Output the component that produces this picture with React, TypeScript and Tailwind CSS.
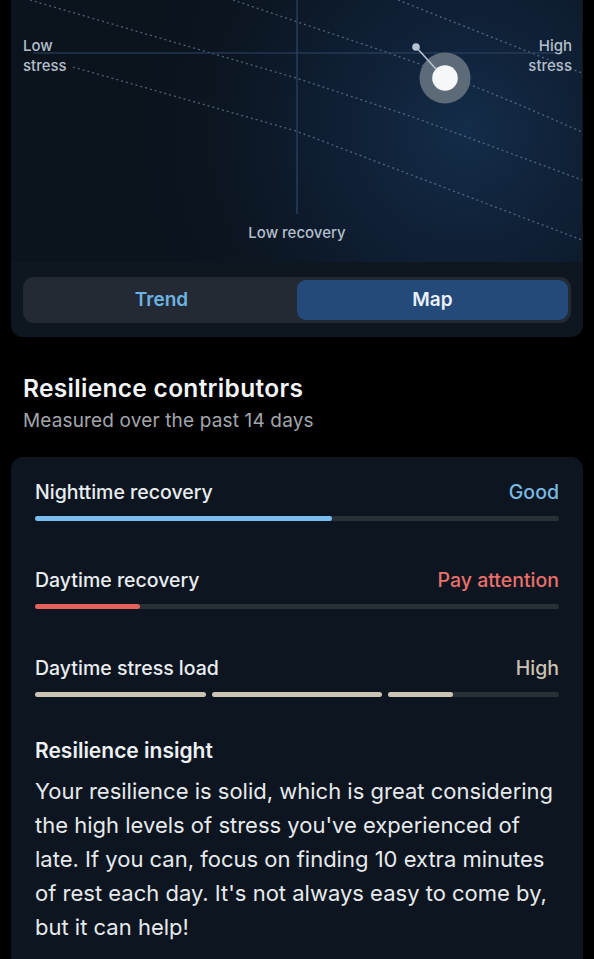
import React from 'react';

type Contributor = {
  label: string;
  status: string;
  statusClass: string;
  fill: number;
  fillClass: string;
};

const contributors: Contributor[] = [
  { label: 'Nighttime recovery', status: 'Good', statusClass: 'text-[#79b9e3]', fill: 56.7, fillClass: 'bg-[#78bdef]' },
  { label: 'Daytime recovery', status: 'Pay attention', statusClass: 'text-[#e9706a]', fill: 20, fillClass: 'bg-[#e2625b]' },
];

function StressMap() {
  return (
    <div className="relative h-[262px]">
      <svg className="absolute inset-0" width="571" height="262" viewBox="0 0 571 262">
        <defs>
          <radialGradient id="glow" cx="455" cy="130" r="340" gradientUnits="userSpaceOnUse">
            <stop offset="0" stopColor="#142d4a" />
            <stop offset="0.45" stopColor="#10213a" stopOpacity="0.7" />
            <stop offset="1" stopColor="#0c151f" stopOpacity="0" />
          </radialGradient>
        </defs>
        <rect width="571" height="262" fill="#0b141d" />
        <rect width="571" height="262" fill="url(#glow)" />
        {/* iso-lines across the map, bending slightly toward the high-stress side */}
        <g stroke="#7d95b0" strokeOpacity="0.6" strokeWidth="1.3" strokeDasharray="2 3" fill="none">
          <polyline points="19,0 285,78 402,117 571,180" />
          <polyline points="62,67 285,131 571,240" />
          <polyline points="222,0 369,50 406,63 509,105 571,132" />
          <polyline points="387,0 571,73" />
        </g>
        <line x1="22" y1="53" x2="552" y2="53" stroke="#2d4767" strokeWidth="1.2" />
        <line x1="286" y1="0" x2="286" y2="214" stroke="#2d4767" strokeWidth="1.2" />
        <circle cx="434" cy="78" r="25.5" fill="#5d6a78" />
        <line x1="405" y1="47" x2="425" y2="69" stroke="#b6c3d2" strokeWidth="1.6" />
        <circle cx="405" cy="47" r="3.8" fill="#b6c3d2" />
        <circle cx="434" cy="78" r="12.8" fill="#f5f7f9" />
      </svg>
      <div className="absolute left-3 top-[36px] text-[15px] font-medium leading-[20px] text-[#b3bfcc]">
        Low
        <br />
        stress
      </div>
      <div className="absolute right-[11px] top-[36px] text-right text-[15px] font-medium leading-[20px] text-[#b3bfcc]">
        High
        <br />
        stress
      </div>
      <div className="absolute left-[236px] top-[223px] w-[100px] text-center text-[15px] font-medium leading-[20px] text-[#b3bfcc]">
        Low recovery
      </div>
    </div>
  );
}

function Bar({ fill, fillClass }: { fill: number; fillClass: string }) {
  return (
    <div className="mt-[11px] h-[5px] w-full rounded-full bg-[#293138]">
      <div className={`h-full rounded-full ${fillClass}`} style={{ width: `${fill}%` }} />
    </div>
  );
}

export default function App() {
  return (
    <div className="min-h-screen bg-black font-['Inter','Noto_Sans',sans-serif] text-[#e9edf0]">
      <div className="mx-[11px] overflow-hidden rounded-b-[12px] bg-[#0e1720] pb-[14px]">
        <StressMap />
        <div className="mx-3 mt-[15px] flex h-[46px] rounded-[11px] bg-[#232a33] p-[3px] text-[19px] font-semibold">
          <div className="flex flex-1 items-center justify-center text-[#6db3e2]">Trend</div>
          <div className="flex flex-1 items-center justify-center rounded-[9px] bg-[#244a7a] text-[#e9f0f7]">
            Map
          </div>
        </div>
      </div>

      <div className="px-[23px] pt-[36px]">
        <h2 className="text-[24.5px] font-semibold leading-[30px] tracking-[0.3px] text-[#f2f4f5]">
          Resilience contributors
        </h2>
        <p className="mt-[5px] text-[19px] leading-[26px] tracking-[0.15px] text-[#a2a6aa]">
          Measured over the past 14 days
        </p>
      </div>

      <div className="mx-[11px] mt-[23px] rounded-t-[12px] bg-[#0d1620] px-6 pb-10 pt-[22px]">
        {contributors.map((c) => (
          <div key={c.label} className="mb-[46px]">
            <div className="flex items-center justify-between text-[19.5px] font-medium leading-[26px]">
              <span>{c.label}</span>
              <span className={c.statusClass}>{c.status}</span>
            </div>
            <Bar fill={c.fill} fillClass={c.fillClass} />
          </div>
        ))}

        <div>
          <div className="flex items-center justify-between text-[19.5px] font-medium leading-[26px]">
            <span>Daytime stress load</span>
            <span className="text-[#cbc2b6]">High</span>
          </div>
          <div className="mt-[11px] flex gap-[6px]">
            <div className="h-[5px] flex-1 rounded-full bg-[#cdc3b5]" />
            <div className="h-[5px] flex-1 rounded-full bg-[#cdc3b5]" />
            <div className="h-[5px] flex-1 rounded-full bg-[#293138]">
              <div className="h-full w-[38%] rounded-full bg-[#cdc3b5]" />
            </div>
          </div>
        </div>

        <h3 className="mt-[40px] text-[21px] font-semibold leading-[28px] text-[#eef1f3]">Resilience insight</h3>
        <p className="mt-[9px] text-[22px] leading-[34px] text-[#e6eaed]">
          Your resilience is solid, which is great considering the high levels of stress you've experienced of
          late. If you can, focus on finding 10 extra minutes of rest each day. It's not always easy to come by,
          but it can help!
        </p>
      </div>
    </div>
  );
}
